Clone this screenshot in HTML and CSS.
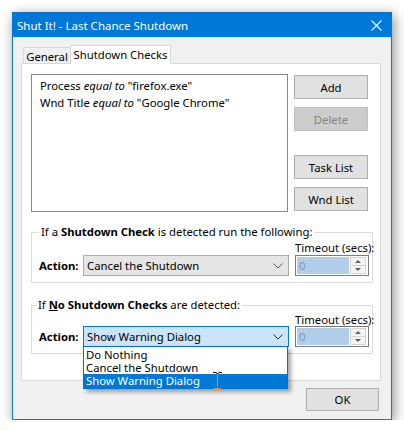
FILE: index.html
```html
<!DOCTYPE html>
<html lang="en">
<head>
  <meta charset="UTF-8" />
  <title>Shut It! - Last Chance Shutdown</title>
  <link rel="stylesheet" href="styles.css">
</head>
<body>
  <div class="window">
    <div class="titlebar">
      <span>Shut It! - Last Chance Shutdown</span>
      <svg class="close" width="11" height="11" viewBox="0 0 11 11">
        <path d="M0.5 0.5 L10.5 10.5 M10.5 0.5 L0.5 10.5" stroke="#fff" stroke-width="1.1" fill="none" />
      </svg>
    </div>
    <div class="client">
      <div class="tabs">
        <div class="tab">General</div>
        <div class="tab active">Shutdown Checks</div>
      </div>
      <div class="panel">
        <div class="top-row">
          <div class="listbox">
            <div class="row">Process <i>equal to</i> "firefox.exe"</div>
            <div class="row">Wnd Title <i>equal to</i> "Google Chrome"</div>
          </div>
          <div class="btn-col">
            <button class="btn">Add</button>
            <button class="btn disabled">Delete</button>
            <button class="btn spaced">Task List</button>
            <button class="btn">Wnd List</button>
          </div>
        </div>

        <fieldset class="group first">
          <legend>If a <b>Shutdown Check</b> is detected run the following:</legend>
          <div class="group-grid">
            <span></span><span></span>
            <span class="timeout-label">Timeout (secs):</span>
            <span class="action-label">Action:</span>
            <div class="combo">
              <span>Cancel the Shutdown</span>
              <svg width="10" height="6" viewBox="0 0 10 6"><path d="M0.5 0.5 L5 5 L9.5 0.5" stroke="#555" fill="none" /></svg>
            </div>
            <div class="spin">
              <span class="spin-edit">0</span>
              <span class="spin-btns">
                <span class="up"></span>
                <span class="down"></span>
              </span>
            </div>
          </div>
        </fieldset>

        <fieldset class="group second">
          <legend>If <b><u>N</u>o Shutdown Checks</b> are detected:</legend>
          <div class="group-grid">
            <span></span><span></span>
            <span class="timeout-label">Timeout (secs):</span>
            <span class="action-label">Action:</span>
            <div class="combo focused">
              <span>Show Warning Dialog</span>
              <svg width="10" height="6" viewBox="0 0 10 6"><path d="M0.5 0.5 L5 5 L9.5 0.5" stroke="#333" fill="none" /></svg>
              <div class="dropdown">
                <div class="item">Do Nothing</div>
                <div class="item">Cancel the Shutdown</div>
                <div class="item selected">Show Warning Dialog</div>
                <svg class="ibeam" width="9" height="17" viewBox="0 0 9 17">
                  <path d="M0 0.5 H3.5 M5.5 0.5 H9 M3.5 1.5 H5.5" stroke="#000" fill="none" />
                  <path d="M4.5 2 V15.5 M1 16.5 H8" stroke="#f5852a" fill="none" />
                </svg>
              </div>
            </div>
            <div class="spin">
              <span class="spin-edit">0</span>
              <span class="spin-btns">
                <span class="up"></span>
                <span class="down"></span>
              </span>
            </div>
          </div>
        </fieldset>
      </div>
      <button class="btn ok">OK</button>
    </div>
  </div>
</body>
</html>
```

FILE: styles.css
```css
* { box-sizing: border-box; }
html, body {
  margin: 0;
  padding: 0;
  background: #fff;
  font-family: "Noto Sans", "Open Sans", sans-serif;
  font-size: 11.3px;
  color: #000;
}
.window {
  position: relative;
  margin: 12px 0 0 12px;
  width: 380px;
  height: 408px;
  border: 1px solid #0a7ad6;
  background: #f0f0f0;
  box-shadow: 2px 3px 12px rgba(0, 0, 0, 0.45);
  display: flex;
  flex-direction: column;
}
.titlebar {
  height: 25px;
  margin: -1px -1px 0;
  padding: 0 10px 0 5px;
  background: #0078d7;
  color: #fff;
  font-size: 11.5px;
  display: flex;
  align-items: center;
  justify-content: space-between;
}
.titlebar span { padding-top: 1px; }
.close { margin-top: 1px; }
.client {
  flex: 1;
  padding: 8px 10px 7px 8px;
  display: flex;
  flex-direction: column;
}
.tabs {
  height: 18px;
  padding-left: 2px;
  display: flex;
  align-items: flex-end;
  position: relative;
  z-index: 1;
}
.tab {
  height: 16px;
  width: 47px;
  border: 1px solid #d9d9d9;
  border-right: none;
  border-bottom: none;
  text-align: center;
  white-space: nowrap;
  line-height: 15px;
  padding-top: 1px;
  background: #f0f0f0;
}
.tab.active {
  width: 101px;
  height: 19px;
  margin-bottom: -1px;
  border-right: 1px solid #d9d9d9;
  background: #fff;
  padding-top: 0;
  line-height: 17px;
}
.panel {
  height: 318px;
  border: 1px solid #d9d9d9;
  background: #fff;
  padding: 10px 7px 0 9px;
}
.top-row {
  display: flex;
  gap: 6px;
}
.listbox {
  width: 257px;
  height: 138px;
  border: 1px solid #828790;
  padding: 2px 0 0 8px;
}
.listbox .row {
  height: 17px;
  line-height: 17px;
  white-space: nowrap;
}
.btn-col {
  display: flex;
  flex-direction: column;
  padding-top: 1px;
  gap: 8px;
}
.btn {
  width: 74px;
  height: 24px;
  border: 1px solid #adadad;
  background: #e1e1e1;
  font: inherit;
  color: #000;
  padding: 0;
}
.btn.disabled {
  background: #cccccc;
  border-color: #bfbfbf;
  color: #838383;
}
.btn.spaced { margin-top: 16px; }
.group {
  margin: 0;
  border: 1px solid #dcdcdc;
  padding: 0 3px 6px 7px;
}
.group legend {
  padding: 0 2px;
  line-height: 16px;
  height: 16px;
  white-space: nowrap;
}
.group.first { margin-top: 12px; }
.group.second { margin-top: 14px; }
.group.second legend { margin-left: -3px; }
.group-grid {
  display: grid;
  grid-template-columns: 44px 212px 74px;
  align-items: center;
}
.group.first .group-grid { grid-template-rows: 15px 21px; }
.group.second .group-grid { grid-template-rows: 13px 21px; }
.timeout-label {
  white-space: nowrap;
  line-height: 13px;
}
.action-label { font-weight: bold; }
.combo {
  position: relative;
  width: 206px;
  height: 21px;
  border: 1px solid #acacac;
  background: #e5e5e5;
  padding: 0 5px 0 3px;
  display: flex;
  align-items: center;
  justify-content: space-between;
}
.combo.focused {
  background: #cce4f7;
  border-color: #0078d7;
}
.spin {
  height: 21px;
  border: 1px solid #7a7a7a;
  padding: 1px 2px 1px 1px;
  display: flex;
  gap: 1px;
}
.spin-edit {
  flex: 1;
  background: #b0cdea;
  color: #7d94b3;
  padding-left: 2px;
  line-height: 17px;
}
.spin-btns {
  width: 16px;
  border: 1px solid #d4d4d4;
  background: #f4f4f4;
  display: flex;
  flex-direction: column;
}
.spin-btns span {
  flex: 1;
  display: flex;
  align-items: center;
  justify-content: center;
}
.spin-btns .up { border-bottom: 1px solid #d4d4d4; }
.spin-btns .up::after {
  content: "";
  border: 3px solid transparent;
  border-top: none;
  border-bottom: 3px solid #606060;
}
.spin-btns .down::after {
  content: "";
  border: 3px solid transparent;
  border-bottom: none;
  border-top: 3px solid #606060;
}
.dropdown {
  position: absolute;
  top: 19px;
  left: -1px;
  width: 205px;
  height: 43px;
  border: 1px solid #0a6fc2;
  background: #fff;
  padding: 1px 0 0 0;
  box-shadow: 3px 3px 4px rgba(0, 0, 0, 0.35);
  z-index: 5;
}
.dropdown .item {
  height: 13px;
  line-height: 13px;
  padding-left: 2px;
  white-space: nowrap;
}
.dropdown .item.selected {
  height: 14px;
  background: #0078d7;
  color: #fff;
}
.ibeam {
  position: absolute;
  left: 129px;
  top: 25px;
}
.btn.ok {
  width: 73px;
  height: 23px;
  margin-top: 7px;
  margin-right: 2px;
  align-self: flex-end;
}
```
